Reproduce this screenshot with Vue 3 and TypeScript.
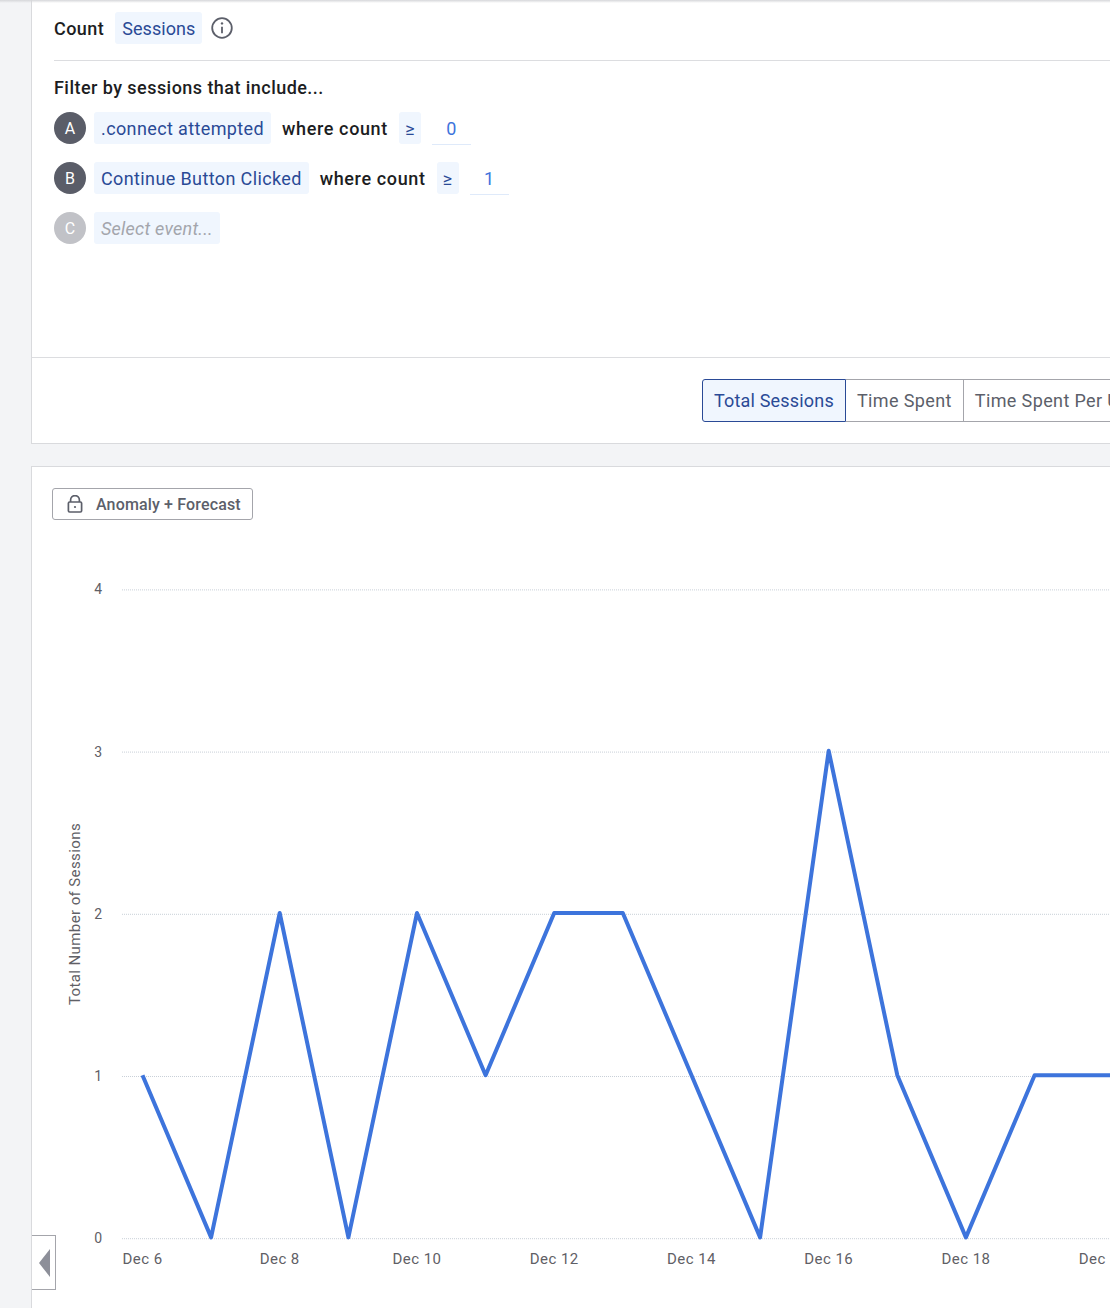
<script setup lang="ts">
interface Row { letter: string; event: string; count: string }
const rows: Row[] = [
  { letter: 'A', event: '.connect attempted', count: '0' },
  { letter: 'B', event: 'Continue Button Clicked', count: '1' },
]
const yTicks = [4, 3, 2, 1, 0]
const yOf = (v: number) => 1237.7 - 466 - v * 162.2
const xOf = (i: number) => 142.5 - 32 + i * 68.62
const values = [1, 0, 2, 0, 2, 1, 2, 2, 1, 0, 3, 1, 0, 1, 1, 1]
const points = values.map((v, i) => `${xOf(i).toFixed(1)},${(yOf(v) - 1.3).toFixed(1)}`).join(' ')
const xLabels = ['Dec 6', 'Dec 8', 'Dec 10', 'Dec 12', 'Dec 14', 'Dec 16', 'Dec 18', 'Dec 20']
</script>

<template>
  <div class="page">
    <section class="panel query">
      <div class="count-row">
        <span class="strong">Count</span>
        <span class="chip sessions">Sessions</span>
        <svg class="info" width="22" height="22" viewBox="0 0 22 22" fill="none" stroke="#5c5f6a" stroke-width="1.8">
          <circle cx="11" cy="11" r="9.8" />
          <path d="M11 9.8v6.4" />
          <circle cx="11" cy="6.4" r="1.2" fill="#5c5f6a" stroke="none" />
        </svg>
      </div>
      <div class="filter">
        <div class="strong heading">Filter by sessions that include...</div>
        <div v-for="r in rows" :key="r.letter" class="row">
          <span class="badge">{{ r.letter }}</span>
          <span class="chip">{{ r.event }}</span>
          <span class="strong where">where count</span>
          <span class="chip op">≥</span>
          <span class="num">{{ r.count }}</span>
        </div>
        <div class="row">
          <span class="badge off">C</span>
          <span class="chip placeholder">Select event...</span>
        </div>
      </div>
      <div class="tabs-bar">
        <div class="tabs">
          <span class="tab active">Total Sessions</span>
          <span class="tab">Time Spent</span>
          <span class="tab last">Time Spent Per User</span>
        </div>
      </div>
    </section>

    <section class="panel chart">
      <button class="lock-btn">
        <svg width="16" height="18" viewBox="0 0 16 18" fill="none" stroke="#5c5f6a" stroke-width="1.7">
          <rect x="1.4" y="7" width="13.2" height="10" rx="1.2" />
          <path d="M3.6 7V5a4.4 4.4 0 0 1 8.8 0v2" />
          <circle cx="8" cy="12" r="1.1" fill="#5c5f6a" stroke="none" />
        </svg>
        <span>Anomaly + Forecast</span>
      </button>
      <svg class="plot" width="1079" height="842" viewBox="0 0 1079 842">
        <g v-for="t in yTicks" :key="t">
          <line x1="90" x2="1079" :y1="yOf(t)" :y2="yOf(t)" class="grid" />
          <text x="70" :y="yOf(t) + 4.5" text-anchor="end" class="tick">{{ t }}</text>
        </g>
        <text class="tick axis" transform="translate(48 447) rotate(-90)" text-anchor="middle">Total Number of Sessions</text>
        <text
          v-for="(l, i) in xLabels"
          :key="l"
          :x="xOf(i * 2)"
          y="797"
          text-anchor="middle"
          class="tick xl"
        >{{ l }}</text>
        <polyline :points="points" class="line" />
      </svg>
      <div class="collapse"><span class="arrow"></span></div>
    </section>
  </div>
</template>

<style scoped>
.page {
  height: 1308px;
  overflow: hidden;
  background: #f3f4f6;
  padding-left: 31px;
  font-family: "Roboto", "Liberation Sans", sans-serif;
  position: relative;
}
.page::before {
  content: "";
  position: absolute;
  left: 0;
  right: 0;
  top: 0;
  height: 3px;
  background: linear-gradient(#d6d7da, rgba(220, 221, 224, 0));
  z-index: 1;
}
.panel {
  background: #fff;
  border-left: 1px solid #d9dadd;
  box-sizing: border-box;
}
.query {
  height: 444px;
  border-bottom: 1px solid #d9dadd;
  display: flex;
  flex-direction: column;
}
.count-row {
  height: 56px;
  padding-bottom: 4px;
  margin-left: 22px;
  border-bottom: 1px solid #dcdde0;
  display: flex;
  align-items: center;
  gap: 11px;
}
.strong {
  font-weight: 500;
  font-size: 18px;
  letter-spacing: 0.45px;
  color: #1c1d22;
}
.chip {
  display: inline-flex;
  align-items: center;
  height: 32px;
  padding: 0 7px;
  background: #f0f6fe;
  border-radius: 3px;
  color: #2a4a96;
  font-size: 18px;
  letter-spacing: 0.38px;
  white-space: nowrap;
}
.sessions {
  letter-spacing: 0.05px;
}
.info {
  margin-left: -2px;
}
.filter {
  flex: 1;
  padding: 16px 0 0 22px;
}
.heading {
  line-height: 22px;
  margin-bottom: 13px;
}
.row {
  height: 32px;
  margin-bottom: 18px;
  display: flex;
  align-items: center;
}
.badge {
  width: 32px;
  height: 32px;
  border-radius: 50%;
  background: #5a5d68;
  color: #fff;
  font-size: 16px;
  display: flex;
  align-items: center;
  justify-content: center;
  margin-right: 8px;
}
.badge.off {
  background: #c1c2c7;
}
.where {
  margin: 0 11px;
  letter-spacing: 0.62px;
}
.op {
  width: 22px;
  padding: 0;
  justify-content: center;
  font-size: 18px;
  letter-spacing: 0;
}
.num {
  width: 39px;
  height: 33px;
  line-height: 34px;
  margin-left: 11px;
  margin-top: 1px;
  text-align: center;
  color: #3d73dc;
  font-size: 18px;
  border-bottom: 1px solid #dfeafa;
  box-sizing: border-box;
}
.placeholder {
  color: #a3a5ac;
  font-style: italic;
  letter-spacing: 0.24px;
}
.tabs-bar {
  height: 86px;
  border-top: 1px solid #dcdde0;
  display: flex;
  align-items: center;
  padding-left: 670px;
  box-sizing: border-box;
}
.tabs {
  display: flex;
  flex-shrink: 0;
  white-space: nowrap;
}
.tab {
  height: 43px;
  box-sizing: border-box;
  line-height: 41px;
  padding: 0 11px;
  font-size: 18px;
  letter-spacing: 0.38px;
  color: #5c5f6a;
  border: 1px solid #a4a5ab;
  border-left: 0;
}
.tab.active {
  color: #2a4a96;
  background: #f0f6fe;
  border: 1px solid #2a4a96;
  border-radius: 3px 0 0 3px;
  letter-spacing: 0.18px;
}
.chart {
  margin-top: 22px;
  height: 842px;
  border-top: 1px solid #d9dadd;
  position: relative;
}
.lock-btn {
  position: absolute;
  left: 20px;
  top: 21px;
  width: 201px;
  height: 32px;
  box-sizing: border-box;
  display: flex;
  align-items: center;
  gap: 13px;
  padding: 0 0 0 14px;
  background: #fff;
  border: 1px solid #a4a5ab;
  border-radius: 3px;
  color: #5c5f6a;
  font-family: inherit;
  font-size: 16px;
  font-weight: 500;
  letter-spacing: 0.15px;
  white-space: nowrap;
}
.plot {
  display: block;
}
.grid {
  stroke: #c9d0d8;
  stroke-width: 1;
  stroke-dasharray: 1 1;
}
.tick {
  font-size: 14px;
  fill: #5f6066;
}
.axis {
  font-size: 15px;
  letter-spacing: 0.4px;
}
.xl {
  font-size: 15px;
  letter-spacing: 0.45px;
}
.line {
  fill: none;
  stroke: #3d74dc;
  stroke-width: 4;
  stroke-linejoin: round;
}
.collapse {
  position: absolute;
  left: 0;
  top: 768px;
  width: 24px;
  height: 55px;
  box-sizing: border-box;
  background: #fff;
  border: 1px solid #a4a5ab;
  border-left: 0;
  display: flex;
  align-items: center;
  padding-left: 7px;
}
.arrow {
  width: 0;
  height: 0;
  border-top: 14px solid transparent;
  border-bottom: 14px solid transparent;
  border-right: 11px solid #8d8f99;
}
</style>
